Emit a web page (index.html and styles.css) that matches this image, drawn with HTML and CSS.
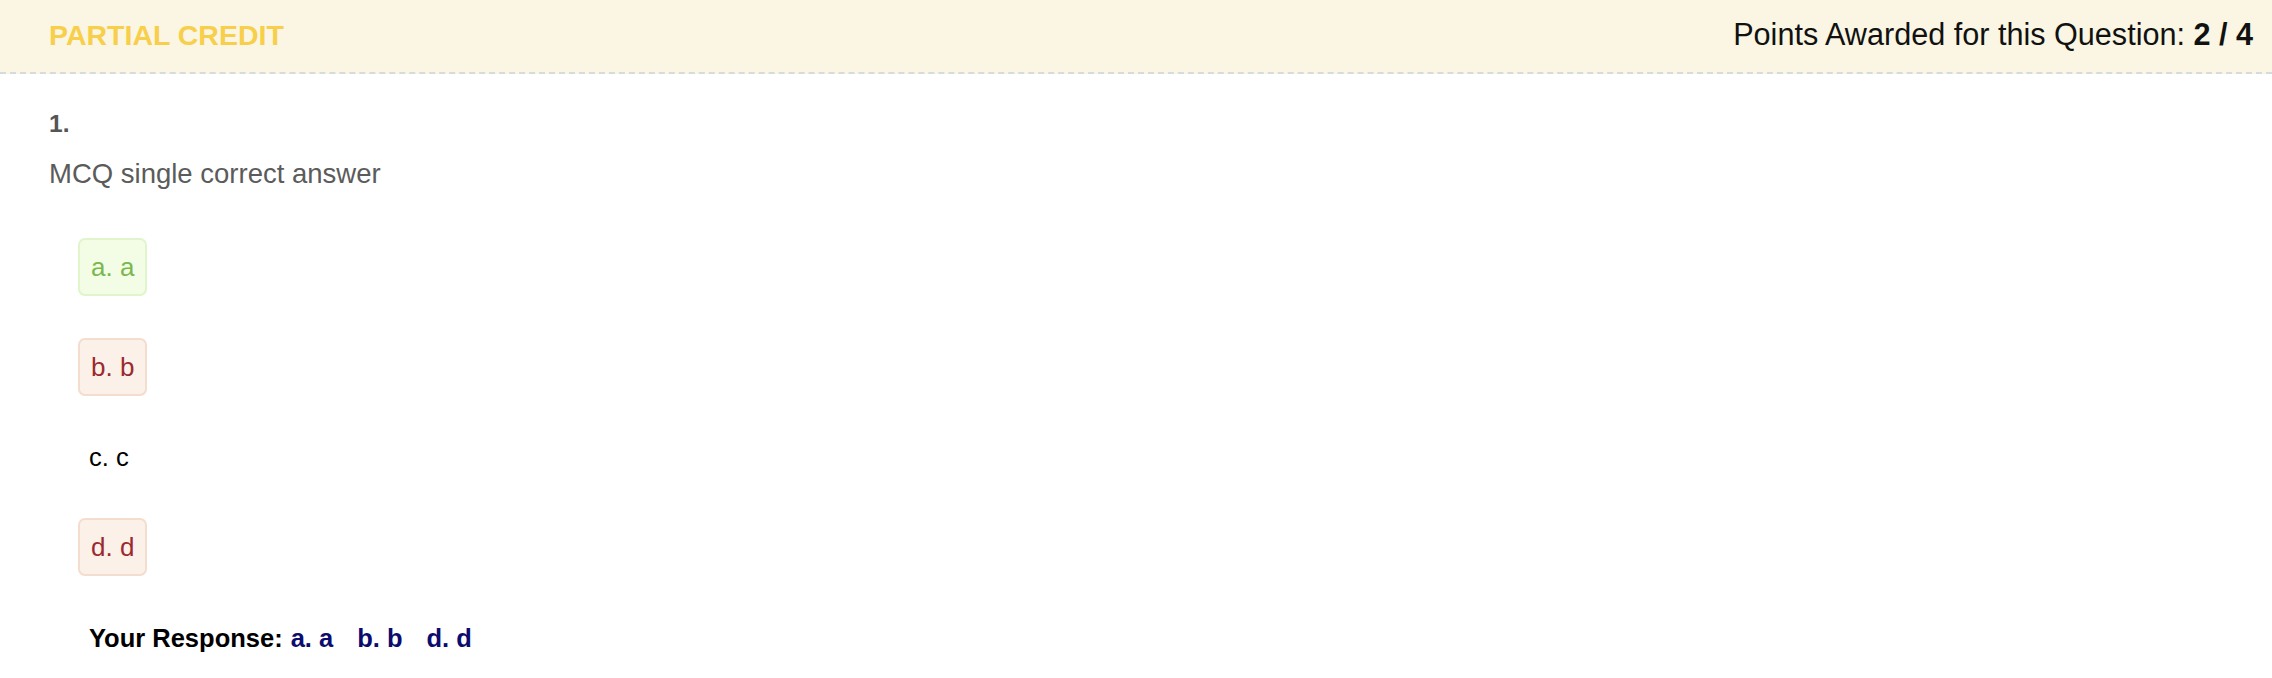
FILE: index.html
```html
<!DOCTYPE html>
<html lang="en">
<head>
<meta charset="utf-8">
<title>Partial credit</title>
<link rel="stylesheet" href="styles.css">
</head>
<body>
<div class="question">
  <div class="q-header">
    <div class="q-status">PARTIAL CREDIT</div>
    <div class="q-points">Points Awarded for this Question: <b>2 / 4</b></div>
  </div>
  <div class="q-body">
    <div class="q-num">1.</div>
    <div class="q-text">MCQ single correct answer</div>
    <div class="options">
      <div class="opt opt-correct">a. a</div>
      <div class="opt opt-wrong">b. b</div>
      <div class="opt opt-plain">c. c</div>
      <div class="opt opt-wrong">d. d</div>
    </div>
    <div class="response">
      <span class="resp-label">Your Response:</span>
      <span class="resp-item">a. a</span>
      <span class="resp-item">b. b</span>
      <span class="resp-item">d. d</span>
    </div>
  </div>
</div>
</body>
</html>
```

FILE: styles.css
```css
* { box-sizing: border-box; }
html, body { margin: 0; padding: 0; background: #ffffff; }
body { font-family: "Liberation Sans", Arial, sans-serif; }

.q-header {
  display: flex;
  justify-content: space-between;
  align-items: baseline;
  height: 74px;
  padding: 14px 19px 0 49px;
  background: #faf6e3;
  border-bottom: 2px dashed #d5dcdd;
  line-height: 40px;
}
.q-status {
  font-size: 28.5px;
  font-weight: 700;
  color: #f8cf4b;
}
.q-points {
  font-size: 30.6px;
  color: #111111;
}
.q-points b { font-weight: 700; }

.q-body {
  padding: 35px 0 0 49px;
}
.q-num {
  font-size: 24.5px;
  line-height: 30px;
  font-weight: 700;
  color: #555555;
}
.q-text {
  margin-top: 18px;
  font-size: 27.5px;
  line-height: 34px;
  color: #5b5b5b;
}

.options {
  display: flex;
  flex-direction: column;
  align-items: flex-start;
  gap: 42px;
  margin: 47px 0 0 29px;
}
.opt {
  font-size: 26px;
  line-height: 54px;
  height: 58px;
  padding: 0 11px;
  border: 2px solid transparent;
  border-radius: 7px;
}
.opt-correct {
  background: #f3fde6;
  border-color: #e1f4cb;
  color: #7ab84f;
}
.opt-wrong {
  background: #fcf1e9;
  border-color: #f4dccf;
  color: #9a2a2f;
}
.opt-plain {
  height: 38px;
  line-height: 38px;
  border: 0;
  padding: 0 11px;
  font-size: 25.5px;
  color: #000000;
}

.response {
  display: flex;
  align-items: baseline;
  margin: 47px 0 0 40px;
  font-size: 25.5px;
  line-height: 30px;
  font-weight: 700;
}
.resp-label { color: #000000; margin-right: 8px; }
.resp-item { color: #0c0c6e; margin-right: 24px; }
```
